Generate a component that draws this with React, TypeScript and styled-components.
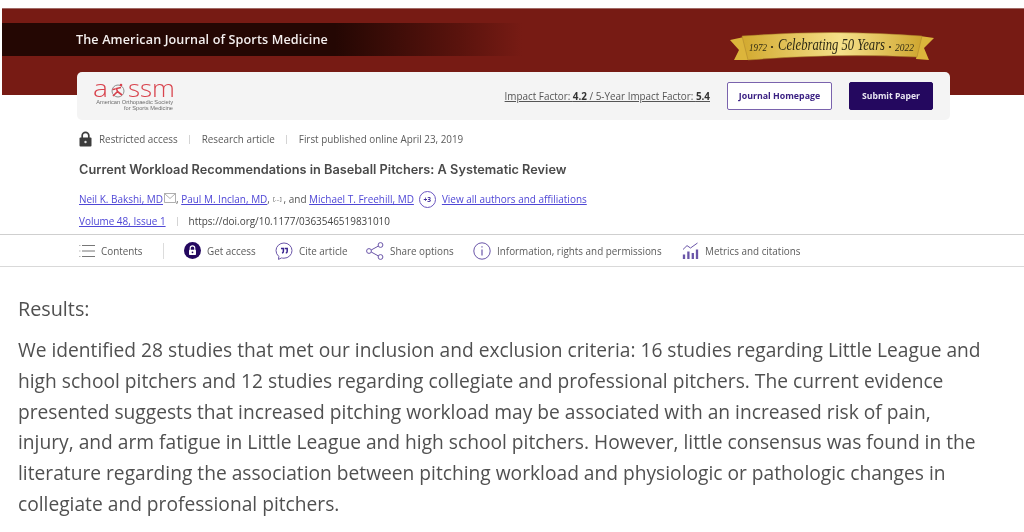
import React from "react";
import styled, { createGlobalStyle } from "styled-components";

const Global = createGlobalStyle`
  html, body { margin: 0; padding: 0; background: #fff; }
  body { font-family: "Open Sans", "Liberation Sans", sans-serif; overflow: hidden; }
`;

const Page = styled.div`
  width: 1024px;
  height: 532px;
  padding-top: 8px;
  box-sizing: border-box;
  overflow: hidden;
  filter: blur(0.45px);
`;

const Hero = styled.header`
  margin-left: 2px;
  height: 87px;
  box-sizing: border-box;
  background: #771b14;
  border-top: 1px solid #a06a66;
  padding-top: 14px;
`;

const HeroTop = styled.div`
  display: flex;
  height: 33px;
`;

const JournalStrip = styled.div`
  width: 520px;
  height: 33px;
  background: linear-gradient(90deg, #240703 0, #240703 64%, #5a130d 88%, #771b14 100%);
  padding-left: 74px;
  box-sizing: border-box;
  display: flex;
  align-items: center;
  color: #f4efee;
  font-size: 12.6px;
  font-weight: 600;
  letter-spacing: 0.01em;
`;

const Ribbon = styled.svg`
  width: 204px;
  height: 32px;
  margin: 8px 0 0 208px;
  flex: none;
  overflow: visible;
`;

const Card = styled.div`
  margin: 16px 0 0 75px;
  width: 873px;
  height: 48px;
  box-sizing: border-box;
  background: #f4f4f4;
  border-radius: 5px;
  display: flex;
  align-items: center;
  padding: 0 17px 0 16px;
`;

const Logo = styled.div`
  width: 82px;
  display: flex;
  flex-direction: column;
  align-items: flex-end;
`;

const LogoMark = styled.svg`
  width: 82px;
  height: 17px;
  display: block;
  overflow: visible;
`;

const LogoCaption = styled.div`
  font-family: "Liberation Sans", sans-serif;
  font-size: 5.7px;
  line-height: 6px;
  color: #6d6d6d;
  text-align: right;
  white-space: nowrap;
  width: 80px;
  margin-right: 2px;
`;

const Factors = styled.div`
  margin-left: auto;
  font-size: 9.9px;
  color: #555;
  white-space: nowrap;
  text-decoration: underline;
  b { color: #333; font-weight: 700; }
`;

const OutlineButton = styled.div`
  margin-left: 17px;
  width: 105px;
  height: 28px;
  box-sizing: border-box;
  border: 1px solid #7a63ad;
  border-radius: 2px;
  background: #fff;
  color: #3b2183;
  font-size: 8.8px;
  font-weight: 700;
  display: flex;
  align-items: center;
  justify-content: center;
`;

const SolidButton = styled(OutlineButton)`
  width: 84px;
  margin-left: 17px;
  background: #24085f;
  border-color: #24085f;
  color: #e9e6f2;
  font-size: 8.6px;
`;

const Meta = styled.div`
  margin: 35px 0 0 79px;
  height: 18px;
  display: flex;
  align-items: center;
  color: #5b5b5b;
  font-size: 9.88px;
  white-space: nowrap;
`;

const LockIcon = styled.svg`
  width: 13px;
  height: 16px;
  margin-right: 7px;
`;

const Sep = styled.span<{ $gap?: number }>`
  width: 1px;
  height: 9px;
  background: #d4d4d4;
  margin: 0 ${(p) => p.$gap ?? 11.5}px;
  flex: none;
`;

const Title = styled.h1`
  margin: 13px 0 0 79px;
  font-size: 12.76px;
  line-height: 18px;
  font-family: "Inter", "Open Sans", sans-serif;
  font-weight: 600;
  color: #4a4a4a;
  white-space: nowrap;
`;

const Authors = styled.div`
  margin: 11px 0 0 79px;
  height: 18px;
  display: flex;
  align-items: center;
  font-size: 9.98px;
  color: #555;
  white-space: nowrap;
`;

const Link = styled.span`
  color: #4f47d6;
  text-decoration: underline;
`;

const Mail = styled.svg`
  width: 12px;
  height: 10px;
  margin: -3px 0 0 1px;
`;

const Elided = styled.span`
  font-size: 6px;
  margin: 0 2px 0 3px;
  color: #555;
`;

const Plus = styled.span`
  width: 17px;
  height: 17px;
  box-sizing: border-box;
  border: 1px solid #6a55c0;
  border-radius: 50%;
  color: #3e2a9b;
  font-size: 6.6px;
  font-weight: 700;
  display: flex;
  align-items: center;
  justify-content: center;
  margin: 0 6px 0 5px;
`;

const Doi = styled.div`
  margin: 4px 0 0 79px;
  height: 18px;
  display: flex;
  align-items: center;
  font-size: 9.95px;
  color: #444;
  white-space: nowrap;
`;

const Toolbar = styled.nav`
  margin-top: 4px;
  height: 31px;
  border-top: 1px solid #cfcfcf;
  border-bottom: 1px solid #d9d9d9;
  display: flex;
  align-items: center;
  padding-left: 79px;
  color: #5b5b5b;
  font-size: 9.88px;
  white-space: nowrap;
`;

const ToolItem = styled.div<{ $w: number }>`
  width: ${(p) => p.$w}px;
  flex: none;
  display: flex;
  align-items: center;
  gap: 6px;
`;

const ToolSep = styled.span`
  width: 1px;
  height: 16px;
  background: #dcdcdc;
  margin-right: 20px;
`;

const Abstract = styled.section`
  padding: 29px 0 0 18px;
  color: #505050;
  white-space: nowrap;
`;

const Heading = styled.h2`
  margin: 0 0 14px;
  font-size: 19.8px;
  line-height: 25px;
  font-weight: 500;
`;

const Para = styled.p`
  margin: 0;
  line-height: 30.8px;
  font-size: 19.2px;
`;

const I = styled.svg`
  display: block;
  flex: none;
`;

const LINES = [
  "We identified 28 studies that met our inclusion and exclusion criteria: 16 studies regarding Little League and",
  "high school pitchers and 12 studies regarding collegiate and professional pitchers. The current evidence",
  "presented suggests that increased pitching workload may be associated with an increased risk of pain,",
  "injury, and arm fatigue in Little League and high school pitchers. However, little consensus was found in the",
  "literature regarding the association between pitching workload and physiologic or pathologic changes in",
  "collegiate and professional pitchers.",
];

export default function App() {
  return (
    <Page>
      <Global />
      <Hero>
        <HeroTop>
          <JournalStrip>The American Journal of Sports Medicine</JournalStrip>
          <Ribbon viewBox="0 0 204 32">
            <defs>
              <linearGradient id="gold" x1="0" x2="1" y1="0" y2="0">
                <stop offset="0" stopColor="#d2a92f" />
                <stop offset="0.55" stopColor="#f5e08a" />
                <stop offset="1" stopColor="#cfa62f" />
              </linearGradient>
            </defs>
            <path d="M0 9 L14 6 L19 29 L4 29 L9 19 Z" fill="#dcb53b" />
            <path d="M204 7 L190 5 L186 28 L199 29 L194 17 Z" fill="#dcb53b" />
            <path d="M12 5 Q104 -2 192 5 L187 26 Q104 22 18 29 Z" fill="url(#gold)" stroke="#a9812a" strokeWidth="0.5" />
            <text x="19" y="20" fontFamily="'Liberation Serif', serif" fontSize="10.5" fill="#2e2a14" fontStyle="italic" textLength="18" lengthAdjust="spacingAndGlyphs">1972</text>
            <circle cx="42" cy="16" r="1.1" fill="#2e2a14" />
            <text x="48" y="19" fontFamily="'Liberation Serif', serif" fontStyle="italic" fontSize="17.5" fill="#2e2a14" textLength="107" lengthAdjust="spacingAndGlyphs">Celebrating 50 Years</text>
            <circle cx="160" cy="16" r="1.1" fill="#2e2a14" />
            <text x="165" y="20" fontFamily="'Liberation Serif', serif" fontSize="10.5" fill="#2e2a14" fontStyle="italic" textLength="19" lengthAdjust="spacingAndGlyphs">2022</text>
          </Ribbon>
        </HeroTop>
        <Card>
          <Logo>
            <LogoMark viewBox="0 0 82 17">
              <text x="0" y="15" fontFamily="'Open Sans', sans-serif" fontWeight="300" fontSize="23" fill="#d8434d" textLength="15" lengthAdjust="spacingAndGlyphs">a</text>
              <text x="35" y="15" fontFamily="'Open Sans', sans-serif" fontWeight="300" fontSize="23" fill="#d8434d" textLength="47" lengthAdjust="spacingAndGlyphs">ssm</text>
              <circle cx="25" cy="9" r="6" fill="none" stroke="#8f8f8f" strokeWidth="1" />
              <path d="M20 14 L24.5 9.5 L23.5 6.5 L28 5.5 M24.5 9.5 L29 13 M22.5 7 L19.5 7.5" fill="none" stroke="#d8434d" strokeWidth="1.6" />
              <circle cx="28" cy="3" r="1.3" fill="#d8434d" />
            </LogoMark>
            <LogoCaption>
              American Orthopaedic Society
              <br />
              for Sports Medicine
            </LogoCaption>
          </Logo>
          <Factors>
            Impact Factor: <b>4.2</b> / 5-Year Impact Factor: <b>5.4</b>
          </Factors>
          <OutlineButton>Journal Homepage</OutlineButton>
          <SolidButton>Submit Paper</SolidButton>
        </Card>
      </Hero>

      <Meta>
        <LockIcon viewBox="0 0 13 16">
          <path d="M3.2 7V4.6a3.3 3.3 0 0 1 6.6 0V7" fill="none" stroke="#3c3c3c" strokeWidth="1.7" />
          <rect x="0.5" y="6.5" width="12" height="9" rx="1" fill="#3c3c3c" />
          <circle cx="6.5" cy="11" r="1.2" fill="#ddd" />
        </LockIcon>
        Restricted access
        <Sep />
        Research article
        <Sep />
        First published online April 23, 2019
      </Meta>

      <Title>Current Workload Recommendations in Baseball Pitchers: A Systematic Review</Title>

      <Authors>
        <Link>Neil K. Bakshi, MD</Link>
        <Mail viewBox="0 0 12 10">
          <path d="M0.5 0.5h11v9h-11z M0.5 0.5L6 5.5L11.5 0.5" fill="none" stroke="#9a9a9a" strokeWidth="0.8" />
        </Mail>
        ,&nbsp;<Link>Paul M. Inclan, MD</Link>,<Elided>[...]</Elided>, and&nbsp;<Link>Michael T. Freehill, MD</Link>
        <Plus>+3</Plus>
        <Link>View all authors and affiliations</Link>
      </Authors>

      <Doi>
        <Link>Volume 48, Issue 1</Link>
        <Sep $gap={11} />
        https://doi.org/10.1177/0363546519831010
      </Doi>

      <Toolbar>
        <ToolItem $w={84}>
          <I width="16" height="14" viewBox="0 0 16 14" fill="none" stroke="#777" strokeWidth="1">
            <path d="M3 1.5h13M3 7h13M3 12.5h13" />
            <path d="M0 1.5h1.5M0 7h1.5M0 12.5h1.5" stroke="#bbb" />
          </I>
          Contents
        </ToolItem>
        <ToolSep />
        <ToolItem $w={91}>
          <I width="17" height="17" viewBox="0 0 17 17">
            <circle cx="8.5" cy="8.5" r="8.5" fill="#24085f" />
            <path d="M6.2 8V6.2a2.3 2.3 0 0 1 4.6 0V8" fill="none" stroke="#fff" strokeWidth="1.1" />
            <rect x="5" y="7.7" width="7" height="5.3" rx="0.7" fill="#fff" />
            <circle cx="8.5" cy="10.3" r="0.9" fill="#24085f" />
          </I>
          Get access
        </ToolItem>
        <ToolItem $w={91}>
          <I width="18" height="18" viewBox="0 0 18 18" fill="none">
            <path d="M9 1a8 7.6 0 0 1 0 15.2c-1 0-1.6-.1-2.4-.3L3.5 17.4l.3-3A7.6 7.6 0 0 1 1 8.6 8 7.6 0 0 1 9 1z" stroke="#6a55a8" strokeWidth="1" />
            <path d="M6 6.4h2.4v2.8c0 .9-.5 1.6-1.4 1.8M9.8 6.4h2.4v2.8c0 .9-.5 1.6-1.4 1.8" stroke="#3a2590" strokeWidth="1.5" />
          </I>
          Cite article
        </ToolItem>
        <ToolItem $w={107}>
          <I width="18" height="18" viewBox="0 0 18 18" fill="none" stroke="#6a55a8" strokeWidth="1">
            <circle cx="3" cy="9" r="2.4" />
            <circle cx="14.5" cy="3" r="2.4" />
            <circle cx="14.5" cy="15" r="2.4" />
            <path d="M5.2 8L12.3 4.1M5.2 10L12.3 13.9" />
          </I>
          Share options
        </ToolItem>
        <ToolItem $w={209}>
          <I width="18" height="18" viewBox="0 0 18 18" fill="none" stroke="#6a55a8">
            <circle cx="9" cy="9" r="8.2" strokeWidth="1" />
            <path d="M9 7.5V13.5" strokeWidth="1.2" />
            <path d="M9 4.2V5.6" strokeWidth="1.2" />
          </I>
          Information, rights and permissions
        </ToolItem>
        <ToolItem $w={130}>
          <I width="17" height="18" viewBox="0 0 17 18" fill="none" stroke="#6a55a8">
            <path d="M1 7.5L5 3.6L8.5 6L15.5 1" strokeWidth="1" />
            <path d="M2 12.5V17M6.4 9.5V17M10.8 11V17M15 7.5V17" strokeWidth="2.3" />
          </I>
          Metrics and citations
        </ToolItem>
      </Toolbar>

      <Abstract>
        <Heading>Results:</Heading>
        <Para>
          {LINES.map((l) => (
            <React.Fragment key={l}>
              {l}
              <br />
            </React.Fragment>
          ))}
        </Para>
      </Abstract>
    </Page>
  );
}
